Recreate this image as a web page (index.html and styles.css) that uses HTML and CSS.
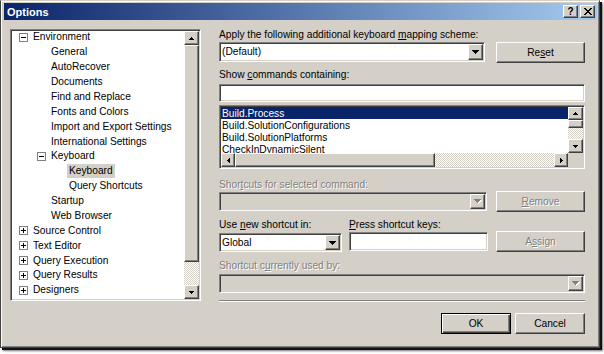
FILE: index.html
```html
<!DOCTYPE html>
<html>
<head>
<meta charset="utf-8">
<link rel="stylesheet" href="styles.css">
</head>
<body>
<div class="window">
  <div class="titlebar">
    <span class="title">Options</span>
    <div class="tbtns">
      <span class="tbtn raised q">?</span>
      <span class="tbtn raised"><svg width="8" height="7" viewBox="0 0 8 7"><path d="M0 0h2v1h1v1h2V1h1V0h2v1H7v1H6v1H5v1h1v1h1v1h1v1H6V6H5V5H3v1H2v1H0V6h1V5h1V4h1V3H2V2H1V1H0z"/></svg></span>
    </div>
  </div>
  <div class="body">
    <div class="tree sunken">
      <div class="tree-items">
        <div class="ti l0"><svg class="exp" width="9" height="9"><rect x=".5" y=".5" width="8" height="8" fill="#fff" stroke="#808080"/><path d="M2 4.5h5" stroke="#000"/></svg><span>Environment</span></div>
        <div class="ti l1"><span>General</span></div>
        <div class="ti l1"><span>AutoRecover</span></div>
        <div class="ti l1"><span>Documents</span></div>
        <div class="ti l1"><span>Find and Replace</span></div>
        <div class="ti l1"><span>Fonts and Colors</span></div>
        <div class="ti l1"><span>Import and Export Settings</span></div>
        <div class="ti l1"><span>International Settings</span></div>
        <div class="ti l1e"><svg class="exp" width="9" height="9"><rect x=".5" y=".5" width="8" height="8" fill="#fff" stroke="#808080"/><path d="M2 4.5h5" stroke="#000"/></svg><span>Keyboard</span></div>
        <div class="ti l2"><span class="sel">Keyboard</span></div>
        <div class="ti l2"><span>Query Shortcuts</span></div>
        <div class="ti l1"><span>Startup</span></div>
        <div class="ti l1"><span>Web Browser</span></div>
        <div class="ti l0"><svg class="exp" width="9" height="9"><rect x=".5" y=".5" width="8" height="8" fill="#fff" stroke="#808080"/><path d="M2 4.5h5M4.5 2v5" stroke="#000"/></svg><span>Source Control</span></div>
        <div class="ti l0"><svg class="exp" width="9" height="9"><rect x=".5" y=".5" width="8" height="8" fill="#fff" stroke="#808080"/><path d="M2 4.5h5M4.5 2v5" stroke="#000"/></svg><span>Text Editor</span></div>
        <div class="ti l0"><svg class="exp" width="9" height="9"><rect x=".5" y=".5" width="8" height="8" fill="#fff" stroke="#808080"/><path d="M2 4.5h5M4.5 2v5" stroke="#000"/></svg><span>Query Execution</span></div>
        <div class="ti l0"><svg class="exp" width="9" height="9"><rect x=".5" y=".5" width="8" height="8" fill="#fff" stroke="#808080"/><path d="M2 4.5h5M4.5 2v5" stroke="#000"/></svg><span>Query Results</span></div>
        <div class="ti l0"><svg class="exp" width="9" height="9"><rect x=".5" y=".5" width="8" height="8" fill="#fff" stroke="#808080"/><path d="M2 4.5h5M4.5 2v5" stroke="#000"/></svg><span>Designers</span></div>
      </div>
      <div class="vscroll tree-vs">
        <div class="sbtn raised"><svg width="5" height="3"><path d="M2 0h1v1h1v1h1v1H0V2h1V1h1z"/></svg></div>
        <div class="thumb raised tree-thumb"></div>
        <div class="track"></div>
        <div class="sbtn raised"><svg width="5" height="3"><path d="M0 0h5v1H4v1H3v1H2V2H1V1H0z"/></svg></div>
      </div>
    </div>

    <div class="right">
      <div class="label l-first">Apply the following additional keyboard <u>m</u>apping scheme:</div>
      <div class="row r1">
        <div class="combo sunken c-scheme">
          <span class="val">(Default)</span>
          <span class="dd raised"><svg width="7" height="4"><path d="M0 0h7v1H6v1H5v1H4v1H3V3H2V2H1V1H0z"/></svg></span>
        </div>
        <div class="btn raised">Re<u>s</u>et</div>
      </div>
      <div class="label l-show">Show <u>c</u>ommands containing:</div>
      <div class="textbox sunken tb-search"></div>
      <div class="listbox sunken">
        <div class="list-rows">
          <div class="lrow sel">Build.Process</div>
          <div class="lrow">Build.SolutionConfigurations</div>
          <div class="lrow">Build.SolutionPlatforms</div>
          <div class="lrow">CheckInDynamicSilent</div>
        </div>
        <div class="vscroll list-vs">
          <div class="sbtn raised up"><svg width="5" height="3"><path d="M2 0h1v1h1v1h1v1H0V2h1V1h1z"/></svg></div>
          <div class="thumb raised list-vthumb"></div>
          <div class="track"></div>
          <div class="sbtn raised dn"><svg width="5" height="3"><path d="M0 0h5v1H4v1H3v1H2V2H1V1H0z"/></svg></div>
        </div>
        <div class="hscroll">
          <div class="sbtn raised lf"><svg width="3" height="5"><path d="M2 0h1v5H2V4H1V3H0V2h1V1h1z"/></svg></div>
          <div class="thumb raised list-hthumb"></div>
          <div class="track"></div>
          <div class="sbtn raised rt"><svg width="3" height="5"><path d="M0 0h1v1h1v1h1v1H2v1H1v1H0z"/></svg></div>
        </div>
        <div class="corner"></div>
      </div>

      <div class="label dis l-sc">Shor<u>t</u>cuts for selected command:</div>
      <div class="row r3">
        <div class="combo sunken dis-field c-sc">
          <span class="val"></span>
          <span class="dd raised"><svg class="dis-arrow" width="8" height="5"><path fill="#fff" d="M1 1h7v1H7v1H6v1H5v1H4V4H3V3H2V2H1z"/><path fill="#808080" d="M0 0h7v1H6v1H5v1H4v1H3V3H2V2H1V1H0z"/></svg></span>
        </div>
        <div class="btn raised dis"><u>R</u>emove</div>
      </div>

      <div class="row labels">
        <div class="label l-use">Use <u>n</u>ew shortcut in:</div>
        <div class="label"><u>P</u>ress shortcut keys:</div>
      </div>
      <div class="row r4">
        <div class="combo sunken c-global">
          <span class="val">Global</span>
          <span class="dd raised"><svg width="7" height="4"><path d="M0 0h7v1H6v1H5v1H4v1H3V3H2V2H1V1H0z"/></svg></span>
        </div>
        <div class="textbox sunken tb-keys"></div>
        <div class="btn raised dis">A<u>s</u>sign</div>
      </div>

      <div class="label dis l-used">Shortcut c<u>u</u>rrently used by:</div>
      <div class="combo sunken dis-field c-used">
        <span class="val"></span>
        <span class="dd raised"><svg width="8" height="5"><path fill="#fff" d="M1 1h7v1H7v1H6v1H5v1H4V4H3V3H2V2H1z"/><path fill="#808080" d="M0 0h7v1H6v1H5v1H4v1H3V3H2V2H1V1H0z"/></svg></span>
      </div>

      <div class="separator"></div>
      <div class="row buttons">
        <div class="btn raised default">OK</div>
        <div class="btn raised">Cancel</div>
      </div>
    </div>
  </div>
</div>
</body>
</html>
```
FILE: styles.css
```css
* { box-sizing: border-box; }
html, body { margin: 0; padding: 0; }
body {
  width: 604px;
  height: 354px;
  overflow: hidden;
  background: #ffffff;
  font-family: "Liberation Sans", Arial, sans-serif;
  font-size: 10.2px;
  color: #000;
}
u { text-decoration: underline; text-underline-offset: 1px; }

.window {
  width: 600px;
  height: 348px;
  background: #d4d0c8;
  border: 1px solid;
  border-color: #d4d0c8 #404040 #404040 #404040;
  box-shadow: inset 1px 1px #fff, inset -1px -1px #808080, 2px 2px 0 #111, 3px 3px 2px rgba(0,0,0,.55);
  padding: 2px 2px 2px 3px;
}

/* 3D helpers */
.raised {
  background: #d4d0c8;
  border: 1px solid;
  border-color: #fff #404040 #404040 #fff;
  box-shadow: inset -1px -1px #808080, inset 1px 1px #d4d0c8;
}
.sunken {
  border: 1px solid;
  border-color: #808080 #fff #fff #808080;
  box-shadow: inset 1px 1px #404040, inset -1px -1px #d4d0c8;
}

/* title bar */
.titlebar {
  height: 17px;
  background: linear-gradient(to right, #0a246a, #a6caf0);
  display: flex;
  align-items: center;
  justify-content: space-between;
  padding: 0 2px;
  color: #fff;
  font-weight: bold;
  font-size: 11px;
}
.title { padding-left: 1px; }
.tbtns { display: flex; gap: 2px; }
.tbtn {
  width: 15px;
  height: 13px;
  display: flex;
  align-items: center;
  justify-content: center;
  color: #000;
}
.tbtn.q { font-size: 10px; font-weight: bold; line-height: 11px; }

/* body */
.body {
  display: flex;
  align-items: flex-start;
  gap: 18px;
  padding: 9px 0 0 6px;
}

/* tree */
.tree {
  width: 191px;
  height: 272px;
  background: #fff;
  padding: 1px;
  display: flex;
}
.tree-items {
  flex: 1;
  overflow: hidden;
  margin-top: -1px;
}
.ti {
  height: 14.875px;
  display: flex;
  align-items: center;
  white-space: nowrap;
}
.ti span { padding: 0 2px; line-height: 14px; }
.ti span.sel { background: #d4d0c8; }
.exp { flex: none; margin-right: 3px; }
.l0 { padding-left: 7px; }
.l1 { padding-left: 37px; }
.l1e { padding-left: 25px; }
.l2 { padding-left: 55px; }

/* scrollbars */
.vscroll {
  width: 15px;
  display: flex;
  flex-direction: column;
  flex: none;
}
.sbtn {
  display: flex;
  align-items: center;
  justify-content: center;
  flex: none;
}
.vscroll .sbtn { height: 14px; }
.track {
  flex: 1;
  background: repeating-conic-gradient(#fff 0 25%, #d4d0c8 0 50%) 0 0 / 2px 2px;
}
.thumb { flex: none; }
.tree-thumb { height: 217px; }

/* right column */
.right {
  width: 366px;
  display: flex;
  flex-direction: column;
}
.label { line-height: 12px; height: 12px; white-space: nowrap; }
.label.dis, .btn.dis { color: #808080; text-shadow: 1px 1px 0 #fff; }
.row { display: flex; align-items: flex-start; }

.l-first { margin-top: 0; }
.r1 { margin-top: 1px; gap: 11px; }
.l-show { margin-top: 6px; }
.tb-search { margin-top: 3px; height: 18px; }
.textbox { background: #fff; }

.combo {
  display: flex;
  background: #fff;
  padding: 1px;
}
.combo .val { flex: 1; padding-left: 1px; line-height: 15px; white-space: nowrap; }
.combo .dd {
  width: 15px;
  display: flex;
  align-items: center;
  justify-content: center;
}
.c-scheme { width: 266px; height: 20px; }
.c-scheme .val { line-height: 16px; }

.btn {
  width: 89px;
  height: 21px;
  line-height: 19px;
  text-align: center;
  flex: none;
}
.btn.default {
  border: 1px solid #000;
  box-shadow: inset 1px 1px #fff, inset -1px -1px #404040, inset -2px -2px #808080;
}

/* listbox */
.listbox {
  margin-top: 3px;
  height: 64px;
  background: #fff;
  padding: 1px;
  display: grid;
  grid-template-columns: 1fr 15px;
  grid-template-rows: 46px 14px;
}
.list-rows { overflow: hidden; }
.lrow { height: 12px; line-height: 13px; padding-left: 1px; white-space: nowrap; }
.lrow.sel { background: #0a246a; color: #fff; }
.list-vs .sbtn.up { height: 13px; }
.list-vs .sbtn.dn { height: 14px; }
.list-vthumb { height: 8px; }
.hscroll { display: flex; }
.hscroll .sbtn { width: 14px; }
.list-hthumb { width: 200px; }
.corner { background: #d4d0c8; }

.l-sc { margin-top: 10px; }
.r3 { gap: 9px; }
.dis-field { background: #d4d0c8; }
.c-sc { width: 268px; height: 19px; margin-top: 1px; }

.labels { margin-top: 7px; }
.l-use { width: 130px; }
.c-global { width: 123px; height: 19px; margin-top: 2px; }
.tb-keys { width: 139px; height: 19px; margin-top: 1px; margin-left: 7px; }
.r4 .btn { margin-left: 8px; }

.l-used { margin-top: 8px; }
.c-used { margin-top: 2px; height: 19px; }

.separator {
  margin-top: 7px;
  height: 2px;
  border-top: 1px solid #808080;
  border-bottom: 1px solid #fff;
}
.buttons { margin-top: 11px; justify-content: flex-end; gap: 4px; }
.buttons .btn { width: 70px; }
```
